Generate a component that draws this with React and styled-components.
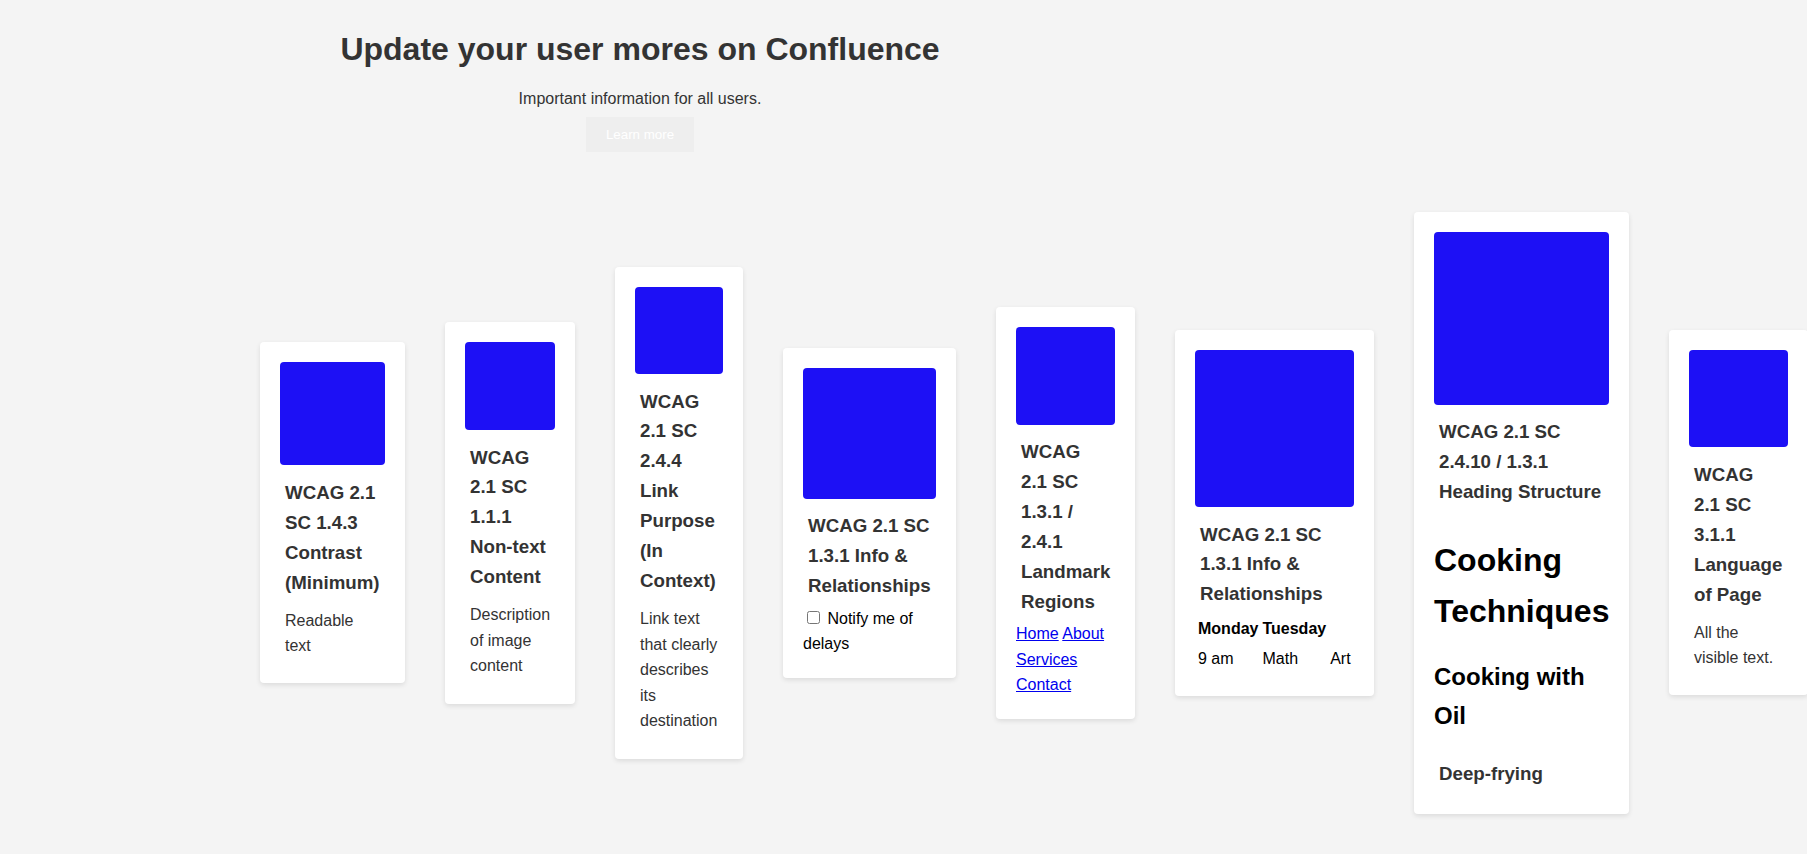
import React from "react";
import styled, { createGlobalStyle } from "styled-components";

const GlobalStyle = createGlobalStyle`
  html, body {
    margin: 0;
    padding: 0;
    background: #f4f4f4;
    overflow: hidden;
  }
  body {
    font-family: "Liberation Sans", Arial, Helvetica, sans-serif;
    font-size: 16px;
    line-height: 1.6;
    color: #333;
  }
`;

const Page = styled.div`
  min-height: 854px;
  padding-top: 24.3px;
  box-sizing: border-box;
`;

const Header = styled.header`
  width: 1280px;
  text-align: center;
`;

const Title = styled.h1`
  margin: 0;
  font-size: 32px;
  line-height: 51.2px;
  font-weight: bold;
  color: #333;
`;

const Subtitle = styled.p`
  margin: 10.2px 0 0;
  font-size: 16px;
  line-height: 25.6px;
  color: #333;
`;

const LearnButton = styled.button`
  margin-top: 5.7px;
  height: 35px;
  padding: 0 20px;
  border: none;
  border-radius: 0;
  background: #eeeeee;
  color: #ffffff;
  font-family: inherit;
  font-size: 13.333px;
  cursor: pointer;
`;

const CardRow = styled.div`
  display: flex;
  align-items: center;
  gap: 40px;
  margin-top: 60px;
  padding-left: 260px;
`;

const Card = styled.article`
  flex: 0 0 auto;
  width: ${(p) => p.$w}px;
  box-sizing: border-box;
  padding: 20px 20px 21px;
  background: #ffffff;
  border-radius: 4px;
  box-shadow: 0 2px 5px rgba(0, 0, 0, 0.1);
`;

const Thumb = styled.div`
  height: ${(p) => p.$h}px;
  background: #1d10f5;
  border-radius: 4px;
`;

const CardTitle = styled.h3`
  margin: 12.5px 0 4px;
  padding: 0 5px;
  font-size: 18.72px;
  line-height: 1.6;
  font-weight: bold;
  color: #333;
`;

const Desc = styled.p`
  margin: 10px 0 3.5px;
  padding: 0 5px;
  font-size: 16px;
  line-height: 1.6;
  color: #333;
`;

const CheckLabel = styled.label`
  display: block;
  margin-top: 5px;
  font-size: 16px;
  line-height: 1.6;
  color: #000;
`;

const LinkNav = styled.nav`
  margin-top: 4px;
  font-size: 16px;
  line-height: 1.6;
  a {
    color: #0000ee;
    text-decoration: underline;
  }
`;

const Schedule = styled.table`
  margin-top: 4px;
  border-spacing: 2px;
  font-family: inherit;
  font-size: 16px;
  line-height: 1.6;
  color: #000;
  th, td {
    padding: 1px;
  }
  th {
    font-weight: bold;
    text-align: center;
  }
  td {
    text-align: left;
  }
`;

const SectionTitle = styled.h1`
  margin: 28px 0 21px;
  font-size: 32px;
  line-height: 1.6;
  font-weight: bold;
  color: #000;
`;

const SectionSub = styled.h2`
  margin: 21px 0 23.5px;
  font-size: 24px;
  line-height: 1.6;
  font-weight: bold;
  color: #000;
`;

export default function App() {
  return (
    <>
      <GlobalStyle />
      <Page>
        <Header>
          <Title>Update your user mores on Confluence</Title>
          <Subtitle>Important information for all users.</Subtitle>
          <LearnButton>Learn more</LearnButton>
        </Header>

        <CardRow>
          <Card $w={145}>
            <Thumb $h={103} />
            <CardTitle>WCAG 2.1 SC 1.4.3 Contrast (Minimum)</CardTitle>
            <Desc>Readable text</Desc>
          </Card>

          <Card $w={130}>
            <Thumb $h={88} />
            <CardTitle>WCAG 2.1 SC 1.1.1 Non-text Content</CardTitle>
            <Desc>Description of image content</Desc>
          </Card>

          <Card $w={128}>
            <Thumb $h={87} />
            <CardTitle>WCAG 2.1 SC 2.4.4 Link Purpose (In Context)</CardTitle>
            <Desc>Link text that clearly describes its destination</Desc>
          </Card>

          <Card $w={173}>
            <Thumb $h={131} />
            <CardTitle>WCAG 2.1 SC 1.3.1 Info &amp; Relationships</CardTitle>
            <CheckLabel>
              <input type="checkbox" /> Notify me of delays
            </CheckLabel>
          </Card>

          <Card $w={139}>
            <Thumb $h={98} />
            <CardTitle>WCAG 2.1 SC 1.3.1 / 2.4.1 Landmark Regions</CardTitle>
            <LinkNav>
              <a href="#home">Home</a> <a href="#about">About</a>{" "}
              <a href="#services">Services</a> <a href="#contact">Contact</a>
            </LinkNav>
          </Card>

          <Card $w={199}>
            <Thumb $h={157} />
            <CardTitle>WCAG 2.1 SC 1.3.1 Info &amp; Relationships</CardTitle>
            <Schedule>
              <tbody>
                <tr>
                  <th>Monday</th>
                  <th>Tuesday</th>
                </tr>
                <tr>
                  <td>9 am</td>
                  <td>Math</td>
                  <td>Art</td>
                </tr>
              </tbody>
            </Schedule>
          </Card>

          <Card $w={215}>
            <Thumb $h={172.7} />
            <CardTitle>WCAG 2.1 SC 2.4.10 / 1.3.1 Heading Structure</CardTitle>
            <SectionTitle>Cooking Techniques</SectionTitle>
            <SectionSub>Cooking with Oil</SectionSub>
            <CardTitle>Deep-frying</CardTitle>
          </Card>

          <Card $w={139}>
            <Thumb $h={97} />
            <CardTitle>WCAG 2.1 SC 3.1.1 Language of Page</CardTitle>
            <Desc>All the visible text.</Desc>
          </Card>
        </CardRow>
      </Page>
    </>
  );
}
